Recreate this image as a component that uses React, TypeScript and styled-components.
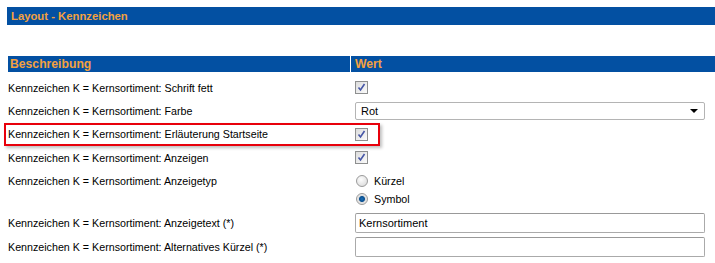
import React from 'react';
import styled, { createGlobalStyle } from 'styled-components';

const GlobalStyle = createGlobalStyle`
  html, body {
    margin: 0;
    padding: 0;
    background: #fff;
  }
  body {
    font-family: "Liberation Sans", Arial, sans-serif;
    font-size: 10.7px;
    color: #000;
  }
`;

const BLUE = '#0350a2';
const ORANGE = '#f3a140';

const Page = styled.div`
  width: 715px;
  height: 263px;
  padding: 7px 0 0 7px;
  box-sizing: border-box;
  overflow: hidden;
`;

const TitleBar = styled.div`
  height: 18px;
  background: ${BLUE};
  color: ${ORANGE};
  font-weight: bold;
  font-size: 11.3px;
  display: flex;
  align-items: center;
  padding-left: 4px;
`;

const Table = styled.div`
  margin-top: 31px;
  margin-left: 1px;
  display: grid;
  grid-template-columns: 342px 1fr;
`;

const HeadCell = styled.div<{ $last?: boolean }>`
  height: 16px;
  background: ${BLUE};
  color: ${ORANGE};
  font-weight: bold;
  font-size: 12.2px;
  display: flex;
  align-items: center;
  padding-left: ${(p) => (p.$last ? '4px' : '2px')};
  margin-left: ${(p) => (p.$last ? '1px' : '0')};
  margin-bottom: 4px;
`;

const Row = styled.div<{ $h: number }>`
  grid-column: 1 / 3;
  display: grid;
  grid-template-columns: 342px 1fr;
  height: ${(p) => p.$h}px;
  position: relative;
`;

const Label = styled.div<{ $top?: number }>`
  display: flex;
  align-items: ${(p) => (p.$top !== undefined ? 'flex-start' : 'center')};
  padding-top: ${(p) => (p.$top ?? 0)}px;
  white-space: nowrap;
`;

const Value = styled.div<{ $top?: number }>`
  display: flex;
  flex-direction: column;
  justify-content: ${(p) => (p.$top !== undefined ? 'flex-start' : 'center')};
  padding-top: ${(p) => (p.$top ?? 0)}px;
  padding-left: 5px;
  padding-right: 10px;
  gap: 6px;
`;

const Highlight = styled.span`
  position: absolute;
  left: -4px;
  top: 1px;
  width: 376px;
  height: 23px;
  border: 2px solid #e8000b;
  box-sizing: border-box;
  box-shadow: 2px 2px 3px rgba(0, 0, 0, 0.25);
  pointer-events: none;
`;

const CheckBox = styled.span`
  width: 13px;
  height: 13px;
  box-sizing: border-box;
  border: 1px solid #8e8f8f;
  background: linear-gradient(135deg, #dcdcdc, #fbfbfb);
  display: flex;
  align-items: center;
  justify-content: center;
`;

const Select = styled.div`
  height: 18px;
  box-sizing: border-box;
  border: 1px solid #b4b4b4;
  border-radius: 2px;
  display: flex;
  align-items: center;
  justify-content: space-between;
  padding: 0 6px 0 5px;
  font-size: 11px;
`;

const Arrow = styled.span`
  width: 0;
  height: 0;
  border-left: 4px solid transparent;
  border-right: 4px solid transparent;
  border-top: 4px solid #000;
`;

const TextBox = styled.div`
  height: 20px;
  box-sizing: border-box;
  border: 1px solid #aaa;
  border-top-color: #999;
  border-radius: 2px;
  display: flex;
  align-items: center;
  padding-left: 3px;
  font-size: 11px;
`;

const RadioLine = styled.div`
  display: flex;
  align-items: center;
  gap: 6px;
  height: 12px;
  padding-left: 1px;
`;

const RadioDot = styled.span<{ $on?: boolean }>`
  width: 12px;
  height: 12px;
  box-sizing: border-box;
  border-radius: 50%;
  border: 1px solid #9a9a9a;
  background: ${(p) =>
    p.$on
      ? 'radial-gradient(circle, #1a6fb8 0, #0a4f8f 2.5px, #dcdcdc 3.5px, #f4f4f4 6px)'
      : 'radial-gradient(circle at 40% 35%, #fdfdfd, #d6d6d6)'};
`;

const Check = () => (
  <CheckBox>
    <svg width="9" height="9" viewBox="0 0 9 9">
      <path d="M1.5 4.5 L3.5 7 L7.5 1" fill="none" stroke="#4656a6" strokeWidth="1.6" />
    </svg>
  </CheckBox>
);

const prefix = 'Kennzeichen K = Kernsortiment: ';

export default function App() {
  return (
    <Page>
      <GlobalStyle />
      <TitleBar>Layout - Kennzeichen</TitleBar>
      <Table>
        <HeadCell>Beschreibung</HeadCell>
        <HeadCell $last>Wert</HeadCell>

        <Row $h={23}>
          <Label>{prefix}Schrift fett</Label>
          <Value>
            <Check />
          </Value>
        </Row>
        <Row $h={23}>
          <Label>{prefix}Farbe</Label>
          <Value>
            <Select>
              Rot
              <Arrow />
            </Select>
          </Value>
        </Row>
        <Row $h={24}>
          <Highlight />
          <Label>{prefix}Erläuterung Startseite</Label>
          <Value>
            <Check />
          </Value>
        </Row>
        <Row $h={23}>
          <Label>{prefix}Anzeigen</Label>
          <Value>
            <Check />
          </Value>
        </Row>
        <Row $h={42}>
          <Label $top={6}>{prefix}Anzeigetyp</Label>
          <Value $top={6}>
            <RadioLine>
              <RadioDot />
              Kürzel
            </RadioLine>
            <RadioLine>
              <RadioDot $on />
              Symbol
            </RadioLine>
          </Value>
        </Row>
        <Row $h={24}>
          <Label>{prefix}Anzeigetext (*)</Label>
          <Value>
            <TextBox>Kernsortiment</TextBox>
          </Value>
        </Row>
        <Row $h={24}>
          <Label>{prefix}Alternatives Kürzel (*)</Label>
          <Value>
            <TextBox />
          </Value>
        </Row>
      </Table>
    </Page>
  );
}
